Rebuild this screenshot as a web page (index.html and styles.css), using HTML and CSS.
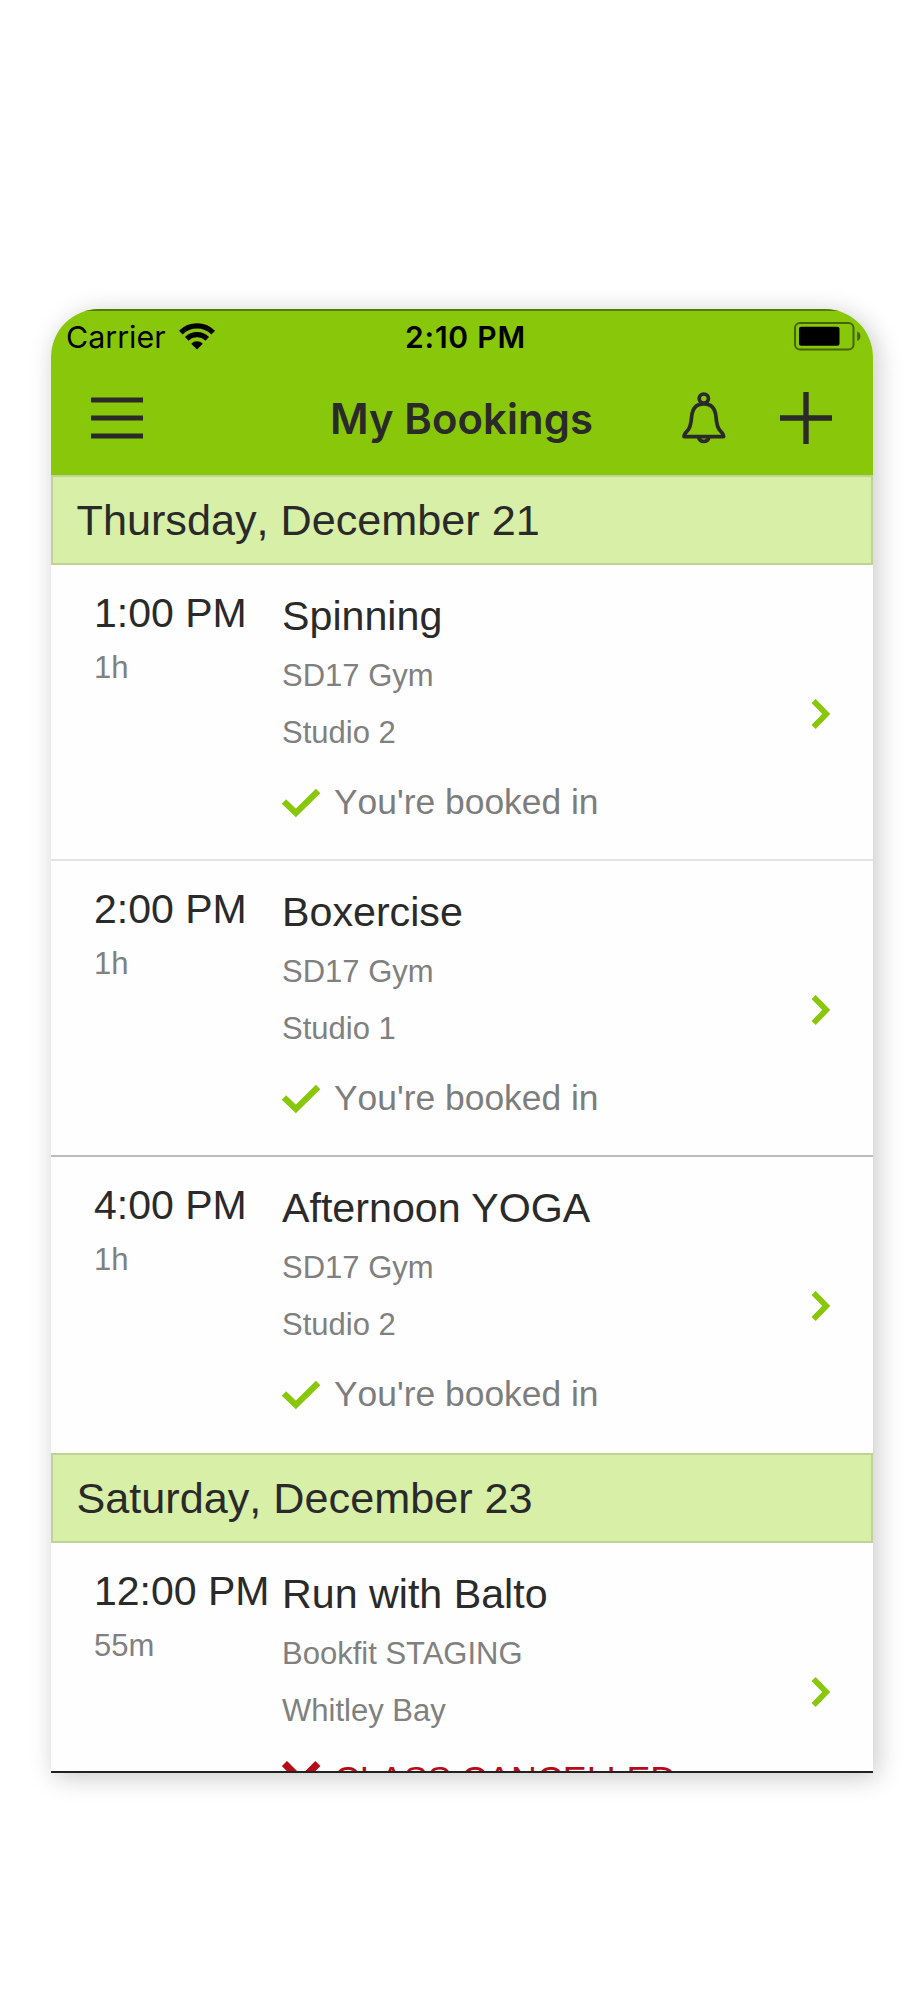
FILE: index.html
```html
<!DOCTYPE html>
<html lang="en">
<head>
<meta charset="utf-8">
<title>My Bookings</title>
<link rel="stylesheet" href="styles.css">
</head>
<body>
<svg class="defs" width="0" height="0" aria-hidden="true">
  <symbol id="check" viewBox="0 0 40 30"><path d="M2 13.5 14.200 25.200 37 2.600" fill="none" stroke="#89c70a" stroke-width="6.400"/></symbol>
  <symbol id="cross" viewBox="0 0 40 40"><path d="M2.500 2.600 36.800 36.900M36.800 2.600 2.500 36.900" fill="none" stroke="#b80a18" stroke-width="7.400"/></symbol>
  <symbol id="chevron" viewBox="0 0 20 32"><path d="M2.600 3 15.200 16 2.600 29" fill="none" stroke="#89c70a" stroke-width="5.800"/></symbol>
</svg>
<main class="phone">
  <header class="header">
    <div class="status">
      <div class="carrier">
        <span>Carrier</span>
        <svg class="wifi" viewBox="0 0 36 27" width="36" height="27"><g fill="none" stroke="#000" stroke-width="5.2"><path d="M1.8 9.6a23 23 0 0 1 32.4 0"/><path d="M7.8 15.8a14.4 14.4 0 0 1 20.4 0"/></g><path d="M18 26.4 12.2 20.7a8.2 8.2 0 0 1 11.6 0z"/></svg>
      </div>
      <time class="clock">2:10 PM</time>
      <svg class="battery" viewBox="0 0 67 29" width="67" height="29"><rect x="1" y="1" width="58.5" height="26.5" rx="5" fill="none" stroke="#456405" stroke-width="2"/><rect x="5" y="4.8" width="40.5" height="19" rx="2" fill="#000"/><path d="M63.2 9.6q3.2 1.4 3.2 4.6t-3.2 4.8z" fill="#456405"/></svg>
    </div>
    <nav class="nav">
      <svg class="menu" viewBox="0 0 52 42" width="52" height="42"><path d="M0 3h52M0 21h52M0 39h52" stroke="#2a2a28" stroke-width="5.200"/></svg>
      <h1 class="title">My Bookings</h1>
      <div class="actions">
        <svg viewBox="0 0 44 53" width="44" height="53"><g fill="none" stroke="#2a2a28" stroke-width="3.700" stroke-linejoin="round"><circle cx="21.8" cy="6.6" r="4.6"/><path d="M21.8 11.8c-7.8 0-11.6 5.4-12.2 13.2C9 33.2 7.800 36.400 5.200 39c-2.400 2.400-3.200 3.600-3.200 5.600H41.600c0-2-.8-3.200-3.200-5.600-2.600-2.600-3.800-5.800-4.400-14-.6-7.800-4.400-13.200-12.200-13.200z"/><path d="M16.600 45.200a5.300 5.300 0 0 0 10.400 0"/></g></svg>
        <svg viewBox="0 0 52 52" width="52" height="52"><path d="M0 26h52M26 0v52" stroke="#2a2a28" stroke-width="5.400"/></svg>
      </div>
    </nav>
  </header>

  <h2 class="day">Thursday, December 21</h2>
  <article class="booking">
    <div class="when"><div class="start">1:00 PM</div><div class="length">1h</div></div>
    <div class="info"><div class="name">Spinning</div><div class="place">SD17 Gym</div><div class="place">Studio 2</div>
      <div class="state"><svg class="check"><use href="#check"/></svg><span>You're booked in</span></div></div>
    <svg class="chevron"><use href="#chevron"/></svg>
  </article>
  <article class="booking strong">
    <div class="when"><div class="start">2:00 PM</div><div class="length">1h</div></div>
    <div class="info"><div class="name">Boxercise</div><div class="place">SD17 Gym</div><div class="place">Studio 1</div>
      <div class="state"><svg class="check"><use href="#check"/></svg><span>You're booked in</span></div></div>
    <svg class="chevron"><use href="#chevron"/></svg>
  </article>
  <article class="booking last">
    <div class="when"><div class="start">4:00 PM</div><div class="length">1h</div></div>
    <div class="info"><div class="name">Afternoon YOGA</div><div class="place">SD17 Gym</div><div class="place">Studio 2</div>
      <div class="state"><svg class="check"><use href="#check"/></svg><span>You're booked in</span></div></div>
    <svg class="chevron"><use href="#chevron"/></svg>
  </article>

  <h2 class="day">Saturday, December 23</h2>
  <div class="clip">
    <article class="booking last">
      <div class="when"><div class="start">12:00 PM</div><div class="length">55m</div></div>
      <div class="info"><div class="name">Run with Balto</div><div class="place">Bookfit STAGING</div><div class="place">Whitley Bay</div>
        <div class="state cancelled"><svg class="cross"><use href="#cross"/></svg><span>CLASS CANCELLED</span></div></div>
      <svg class="chevron"><use href="#chevron"/></svg>
    </article>
  </div>
</main>
</body>
</html>
```
FILE: styles.css
```css
* { box-sizing: border-box; }
body {
  min-height: 2000px;
  margin: 0;
  padding: 309px 51px 0;
  background: #fff;
  color: #2a2a2a;
  font-family: "Liberation Sans", Arial, sans-serif;
}
.defs { display: none; }
.phone {
  display: flex;
  flex-direction: column;
  width: 822px;
  height: 1464px;
  border-radius: 48px 48px 0 0;
  overflow: hidden;
  background: #fefefe;
  box-shadow: 4px 4px 26px rgba(0, 0, 0, .22);
}
.header {
  flex: none;
  height: 166px;
  border-top: 2px solid #55780f;
  background: #89c70a;
  font-family: Inter, sans-serif;
}
.status {
  display: grid;
  grid-template-columns: 1fr auto 1fr;
  height: 54px;
  padding: 0 12px 0 15px;
  line-height: 52px;
  color: #000;
}
.carrier { display: flex; gap: 13px; font-size: 30.400px; }
.wifi { margin-top: 12px; }
.clock { padding-left: 4px; font-size: 30px; font-weight: 600; letter-spacing: .8px; }
.battery { justify-self: end; margin-top: 11px; }
.nav {
  display: grid;
  grid-template-columns: 1fr auto 1fr;
  align-items: center;
  height: 105px;
  padding: 0 41px 0 40px;
}
.title { margin: 0; padding-top: 2px; font-size: 41.800px; font-weight: 600; letter-spacing: .1px; line-height: 50px; color: #2a2a28; }
.actions { display: flex; align-items: center; justify-content: flex-end; gap: 54px; padding-top: 1px; }
.day {
  flex: none;
  height: 90px;
  margin: 0;
  padding-left: 23.500px;
  border: 2px solid #bfd397;
  background: #d8efa8;
  font-size: 43.200px;
  font-weight: 400;
  line-height: 86px;
  font-kerning: none;
}
.booking {
  display: grid;
  flex: none;
  grid-template-columns: 188px 1fr auto;
  height: 296px;
  padding: 0 42px 0 43px;
  border-bottom: 2px solid #e3e3e3;
}
.booking.strong { border-color: #bcbcbc; }
.booking.last { border-color: transparent; }
.when { padding-top: 24px; white-space: nowrap; }
.start, .name { font-size: 41.200px; line-height: 48px; }
.start { font-size: 41px; font-kerning: none; }
.length { padding-top: 10px; font-size: 31px; line-height: 42px; color: #808080; }
.info { padding-top: 27px; }
.name { margin-bottom: 7px; }
.place { font-size: 31px; line-height: 57px; color: #808080; }
.state {
  display: flex;
  gap: 13px;
  margin-top: 19px;
  font-size: 35.400px;
  line-height: 44px;
  color: #7d7d7d;
  font-kerning: none;
}
.cancelled { margin-top: 16px; font-size: 35.800px; color: #b80a18; }
.cancelled span { padding-top: 2px; }
.check { width: 39px; height: 30px; margin-top: 8px; }
.cross { width: 39px; height: 39px; margin-top: 6px; }
.chevron { align-self: center; width: 20px; height: 32px; margin-top: 4px; }
.clip { flex: 1; min-height: 0; overflow: hidden; border-bottom: 2px solid #222; }
```
